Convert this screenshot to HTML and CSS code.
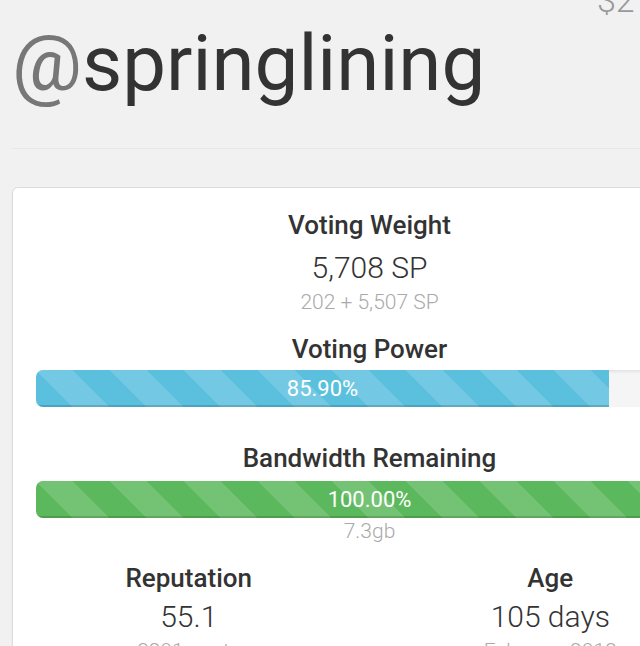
FILE: index.html
```html
<!DOCTYPE html>
<html>
<head>
<meta charset="utf-8">
<link rel="stylesheet" href="styles.css">
</head>
<body>
<div class="page">
  <header class="header">
    <h1 class="username"><span class="at">@</span>springlining</h1>
    <div class="worth">$2</div>
  </header>

  <section class="card">
    <h2 class="label">Voting Weight</h2>
    <div class="value">5,708 SP</div>
    <div class="sub">202 + 5,507 SP</div>

    <h2 class="label label-vp">Voting Power</h2>
    <div class="progress">
      <div class="bar bar-info" style="width: 85.9%">85.90%</div>
    </div>

    <h2 class="label label-bw">Bandwidth Remaining</h2>
    <div class="progress progress-bw">
      <div class="bar bar-success" style="width: 100%">100.00%</div>
    </div>
    <div class="sub sub-bw">7.3gb</div>

    <div class="row">
      <div class="col">
        <h2 class="label">Reputation</h2>
        <div class="value value-row">55.1</div>
        <div class="sub sub-row">3291 posts</div>
      </div>
      <div class="col">
        <h2 class="label">Age</h2>
        <div class="value value-row">105 days</div>
        <div class="sub sub-row">February 2018</div>
      </div>
    </div>
  </section>
</div>
</body>
</html>
```

FILE: styles.css
```css
html, body {
  margin: 0;
  padding: 0;
  overflow: hidden;
  background: #f1f1f1;
}

body {
  font-family: Roboto, "Liberation Sans", sans-serif;
  color: #333;
  width: 640px;
  height: 646px;
}

.page {
  padding-left: 12px;
}

.header {
  display: flex;
  align-items: flex-start;
  padding-bottom: 41px;
  border-bottom: 1px solid #e7e7e7;
}

.username {
  margin: 21px 0 0 0;
  font-size: 78px;
  line-height: 86px;
  font-weight: 400;
  color: #333;
  white-space: nowrap;
}

.username .at {
  color: #777;
}

.worth {
  margin-left: auto;
  margin-top: -17px;
  width: 43px;
  flex: 0 0 43px;
  white-space: nowrap;
  font-size: 34px;
  line-height: 34px;
  font-weight: 300;
  color: #999;
}

.card {
  margin-top: 38px;
  width: 667px;
  padding: 22px 23px 40px;
  background: #fff;
  border: 1px solid #dcdcdc;
  border-radius: 6px;
  box-shadow: 0 1px 2px rgba(0, 0, 0, 0.05);
  text-align: center;
}

.label {
  margin: 0;
  font-size: 26px;
  line-height: 30px;
  font-weight: 500;
  color: #333;
}

.value {
  margin-top: 11px;
  font-size: 30px;
  line-height: 34px;
  font-weight: 300;
  color: #333;
}

.sub {
  margin-top: 5px;
  font-size: 21px;
  line-height: 24px;
  font-weight: 300;
  color: #aaa;
}

.label-vp {
  margin-top: 20px;
}

.progress {
  margin-top: 6px;
  height: 37px;
  border-radius: 7px;
  overflow: hidden;
  background: #f5f5f5;
  box-shadow: inset 0 2px 3px rgba(0, 0, 0, 0.08);
  text-align: left;
}

.bar {
  height: 37px;
  line-height: 37px;
  font-size: 22px;
  font-weight: 400;
  color: #fff;
  text-align: center;
  box-shadow: inset 0 -2px 0 rgba(0, 0, 0, 0.15);
  background-image: linear-gradient(45deg,
    rgba(255, 255, 255, 0.15) 25%, transparent 25%,
    transparent 50%, rgba(255, 255, 255, 0.15) 50%,
    rgba(255, 255, 255, 0.15) 75%, transparent 75%, transparent);
  background-size: 74px 74px;
}

.bar-info {
  background-color: #5bc0de;
}

.bar-success {
  background-color: #5cb85c;
}

.label-bw {
  margin-top: 36px;
}

.progress-bw {
  margin-top: 8px;
}

.sub-bw {
  margin-top: 1px;
  font-size: 21px;
}

.row {
  display: flex;
  margin: 20px -28px 0;
}

.col {
  flex: 1 1 0;
}

.value-row {
  margin-top: 7px;
}

.sub-row {
  margin-top: 5px;
}
```
